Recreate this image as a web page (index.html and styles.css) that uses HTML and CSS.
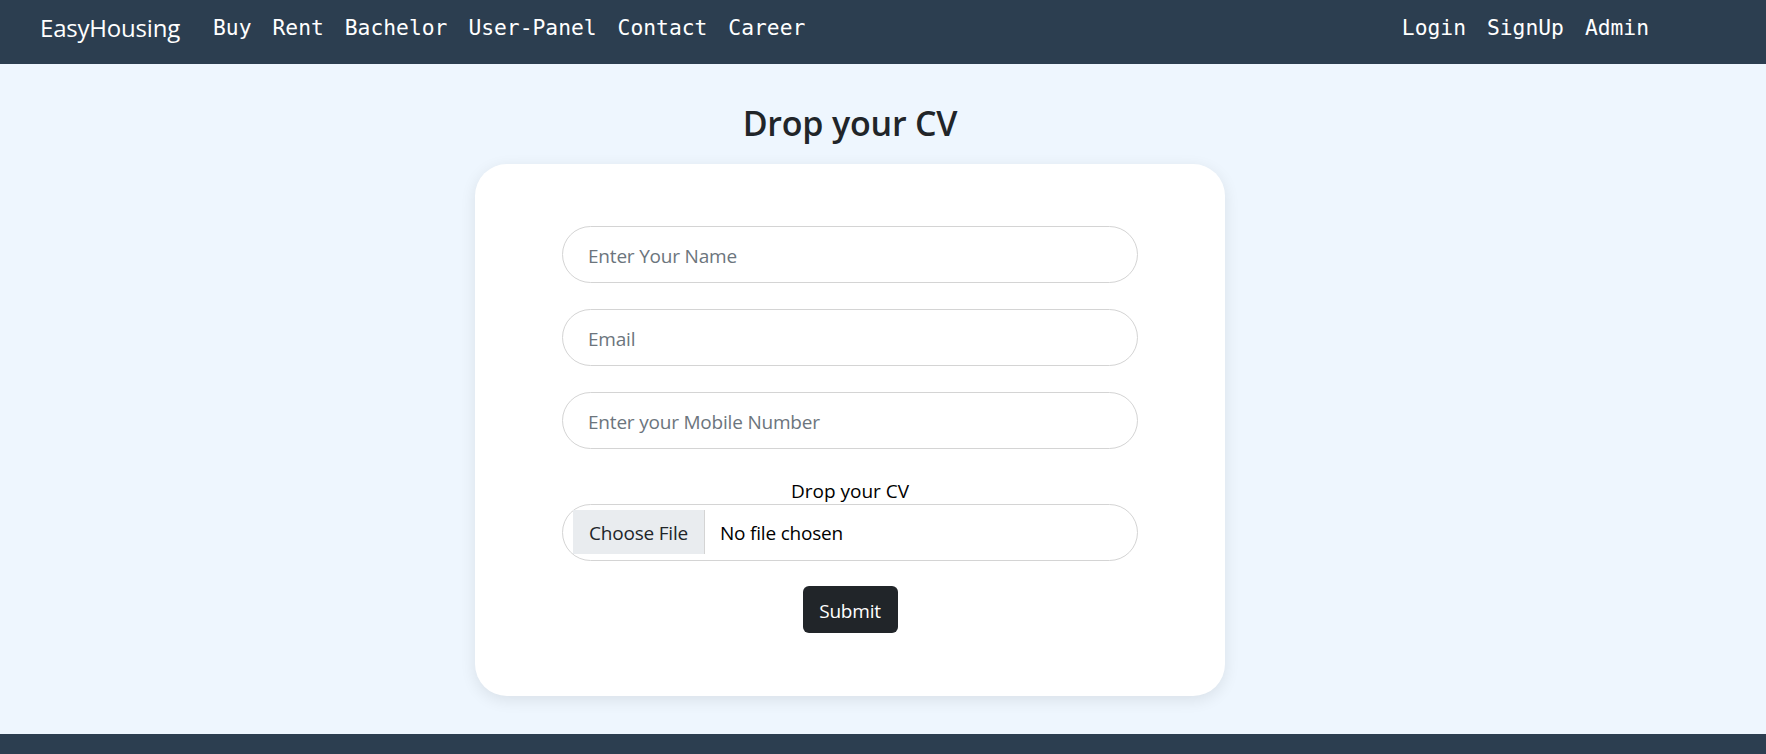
FILE: index.html
```html
<!DOCTYPE html>
<html lang="en">
<head>
<meta charset="utf-8">
<title>EasyHousing - Career</title>
<link rel="stylesheet" href="styles.css">
</head>
<body>
<nav class="navbar">
  <a class="brand" href="#">EasyHousing</a>
  <ul class="nav-links">
    <li><a href="#">Buy</a></li>
    <li><a href="#">Rent</a></li>
    <li><a href="#">Bachelor</a></li>
    <li><a href="#">User-Panel</a></li>
    <li><a href="#">Contact</a></li>
    <li><a href="#">Career</a></li>
  </ul>
  <ul class="nav-links nav-right">
    <li><a href="#">Login</a></li>
    <li><a href="#">SignUp</a></li>
    <li><a href="#">Admin</a></li>
  </ul>
</nav>
<main class="main">
  <h2 class="title">Drop your CV</h2>
  <div class="card">
    <form class="cv-form">
      <input class="field" type="text" placeholder="Enter Your Name">
      <input class="field" type="email" placeholder="Email">
      <input class="field" type="tel" placeholder="Enter your Mobile Number">
      <div class="file-label">Drop your CV</div>
      <label class="file-field">
        <span class="file-btn">Choose File</span>
        <span class="file-name">No file chosen</span>
      </label>
      <div class="submit-row">
        <button class="submit" type="button">Submit</button>
      </div>
    </form>
  </div>
</main>
<footer class="footer"></footer>
</body>
</html>
```
FILE: styles.css
```css
* { box-sizing: border-box; }
html, body { margin: 0; padding: 0; }
body {
  background: #eef6fe;
  font-family: "Open Sans", "Noto Sans", sans-serif;
  color: #212529;
  overflow: hidden;
}
.navbar {
  height: 64px;
  background: #2c3e50;
  display: flex;
  align-items: flex-start;
  padding: 13px 117px 0 40px;
}
.brand {
  color: #fff;
  text-decoration: none;
  font-size: 24px;
  line-height: 30px;
  letter-spacing: -0.2px;
  margin-right: 33px;
}
.nav-links {
  list-style: none;
  margin: 2px 0 0 0;
  padding: 0;
  display: flex;
  gap: 21px;
}
.nav-right { margin-left: auto; }
.nav-links a {
  color: #fff;
  text-decoration: none;
  font-family: "DejaVu Sans Mono", "Liberation Mono", monospace;
  font-size: 21.3px;
  line-height: 25px;
}
.main {
  height: 670px;
  padding: 39px 66px 0 0;
  display: flex;
  flex-direction: column;
  align-items: center;
}
.title {
  margin: 0 0 21px;
  font-size: 34px;
  line-height: 40px;
  font-weight: 600;
  letter-spacing: -0.2px;
  color: #212529;
}
.card {
  width: 750px;
  background: #fff;
  border-radius: 32px;
  padding: 62px 87px 63px;
  box-shadow: 0 4px 16px rgba(0, 0, 0, 0.09);
}
.cv-form { display: flex; flex-direction: column; }
.field {
  width: 100%;
  height: 57px;
  border: 1px solid #d4d4d4;
  border-radius: 30px;
  padding: 3px 25px 0;
  font-family: inherit;
  font-size: 19px;
  color: #212529;
  background: #fff;
  margin: 0 0 26px;
  outline: none;
}
.field:last-of-type { margin-bottom: 30px; }
.field::placeholder { color: #6c757d; letter-spacing: -0.2px; }
.file-label {
  text-align: center;
  font-size: 19px;
  line-height: 24px;
  margin-bottom: 1px;
  color: #000;
}
.file-field {
  height: 57px;
  border: 1px solid #d4d4d4;
  border-radius: 30px;
  padding: 5px 10px 6px;
  display: flex;
  align-items: stretch;
  font-size: 19px;
  cursor: pointer;
}
.file-btn {
  width: 132px;
  background: #e9ecef;
  border-right: 1px solid #d4d4d4;
  display: flex;
  align-items: center;
  justify-content: center;
  color: #212529;
  letter-spacing: -0.2px;
  padding-top: 2px;
}
.file-name {
  display: flex;
  align-items: center;
  padding: 2px 0 0 15px;
  color: #000;
  letter-spacing: -0.2px;
}
.submit-row {
  display: flex;
  justify-content: center;
  margin-top: 25px;
}
.submit {
  width: 95px;
  height: 47px;
  background: #212529;
  color: #fff;
  border: none;
  border-radius: 6px;
  font-family: inherit;
  font-size: 19px;
  padding: 2px 0 0;
  letter-spacing: -0.2px;
}
.footer {
  height: 20px;
  background: #2c3e50;
}
```
